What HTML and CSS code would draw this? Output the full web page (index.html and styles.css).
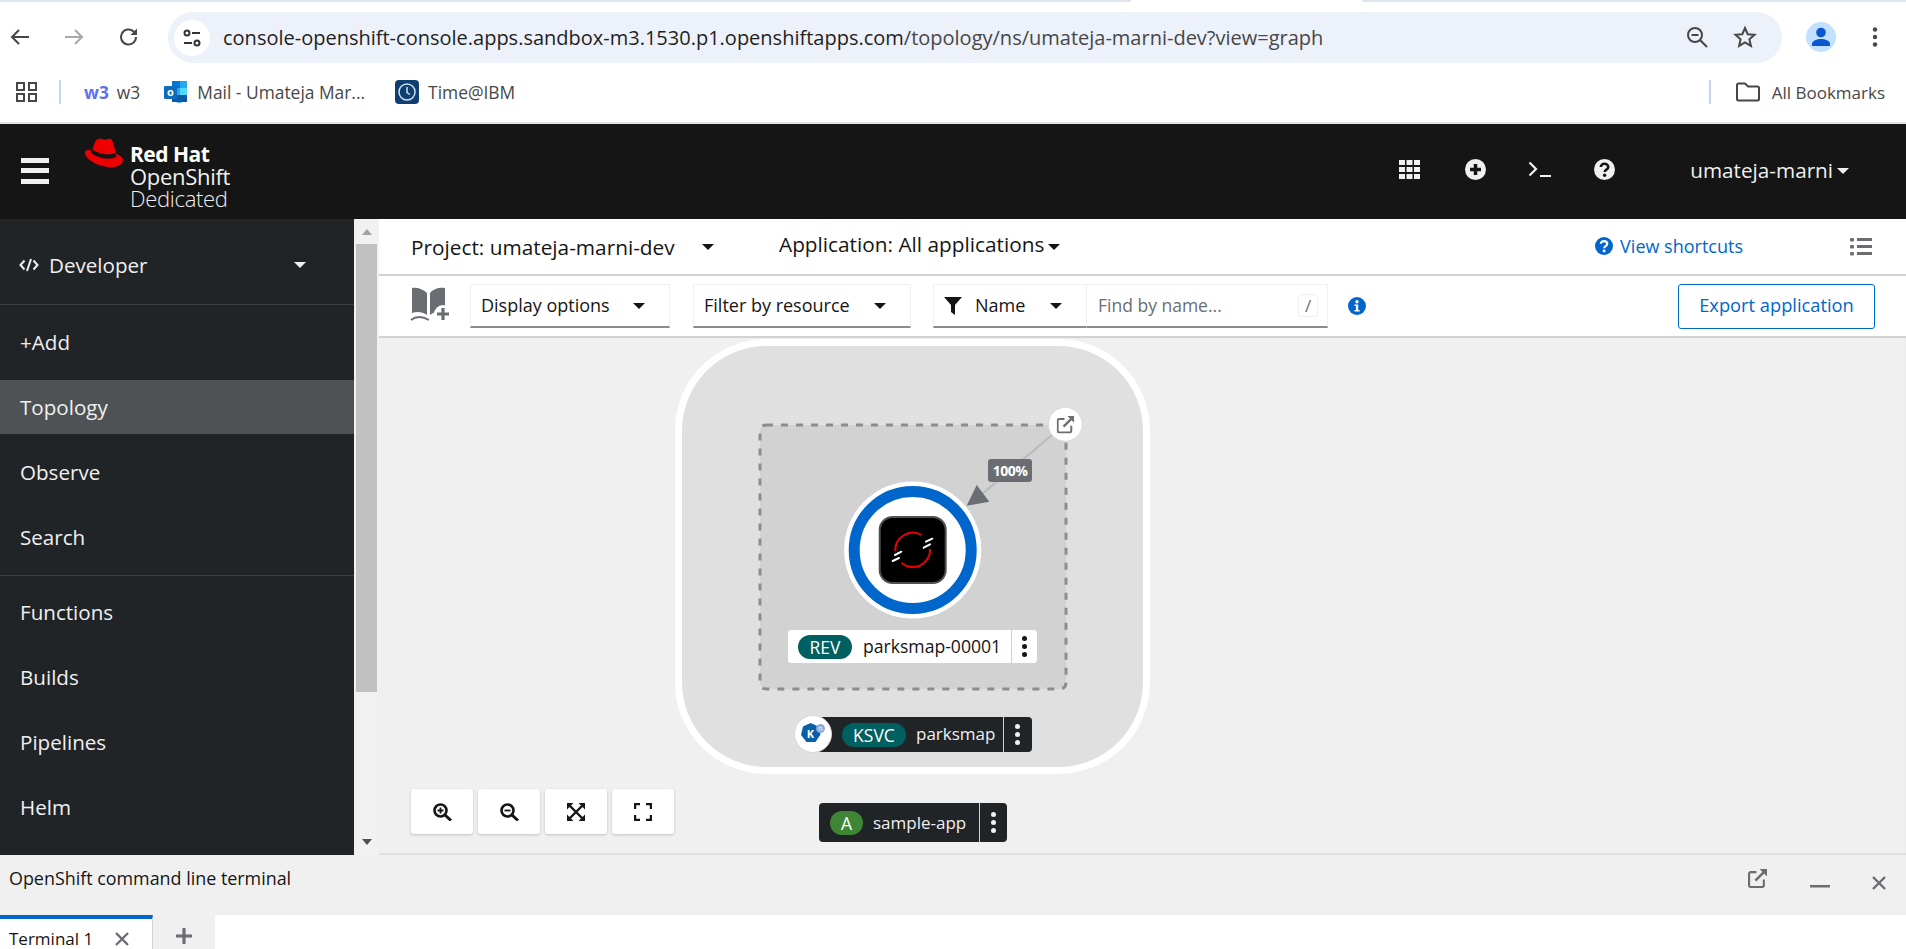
FILE: index.html
```html
<!DOCTYPE html>
<html lang="en">
<head>
    <meta charset="UTF-8">
    <title>Topology - OpenShift Dedicated</title>
    <link rel="stylesheet" href="styles.css">
</head>
<body>
<!-- browser chrome -->
<div class="tabstrip">
    <span class="strip-left"></span>
    <span class="strip-right"></span>
</div>
<div class="toolbar">
    <svg class="tb-icon" width="24" height="24" viewBox="0 0 24 24"><path d="M21 12H4M11 5l-7 7 7 7" fill="none" stroke="#474747" stroke-width="2"/></svg>
    <svg class="tb-icon fwd" width="24" height="24" viewBox="0 0 24 24"><path d="M3 12h17M13 5l7 7-7 7" fill="none" stroke="#a8a8a8" stroke-width="2"/></svg>
    <svg class="tb-icon reload" width="24" height="24" viewBox="0 0 24 24"><path d="M19 12a7.500 7.500 0 1 1-2.400-5.500L19 9" fill="none" stroke="#474747" stroke-width="2"/><path d="M20 3.500V10h-6.500z" fill="#474747"/></svg>
    <div class="omnibox">
        <span class="site-btn">
            <svg width="22" height="22" viewBox="0 0 22 22"><g fill="none" stroke="#333" stroke-width="2"><circle cx="6" cy="6" r="2.500"/><circle cx="16" cy="16" r="2.500"/><path d="M11 6h8M3 16h8"/></g></svg>
        </span>
        <span class="url">console-openshift-console.apps.sandbox-m3.1530.p1.openshiftapps.com<span class="url-path">/topology/ns/umateja-marni-dev?view=graph</span></span>
        <svg class="omni-zoom" width="24" height="24" viewBox="0 0 24 24"><g fill="none" stroke="#474747" stroke-width="2"><circle cx="10" cy="10" r="7"/><path d="M15 15l7 7M6.500 10h7"/></g></svg>
        <svg class="omni-star" width="24" height="24" viewBox="0 0 24 24"><path d="M12 3l2.700 6.200 6.800.6-5.100 4.500 1.500 6.600L12 17.400 6.100 20.900l1.500-6.600L2.500 9.800l6.800-.6z" fill="none" stroke="#474747" stroke-width="2"/></svg>
    </div>
    <span class="avatar">
        <svg width="22" height="22" viewBox="0 0 22 22"><circle cx="11" cy="6.500" r="4.800" fill="#0b57d0"/><path d="M2 20v-2c0-3.500 5-5 9-5s9 1.500 9 5v2z" fill="#0b57d0"/></svg>
    </span>
    <svg class="tb-more" width="6" height="24" viewBox="0 0 6 24"><circle cx="3" cy="4.500" r="2.200" fill="#474747"/><circle cx="3" cy="12" r="2.200" fill="#474747"/><circle cx="3" cy="19.500" r="2.200" fill="#474747"/></svg>
</div>
<div class="bookmarks">
    <svg class="apps" width="21" height="20" viewBox="0 0 21 20"><g fill="none" stroke="#474747" stroke-width="2"><rect x="1" y="1" width="7" height="7"/><rect x="13" y="1" width="7" height="7"/><rect x="1" y="12" width="7" height="7"/><rect x="13" y="12" width="7" height="7"/></g></svg>
    <span class="bm-sep"></span>
    <span class="bm bm-w3"><b>w3</b> w3</span>
    <span class="bm bm-mail">
        <svg width="24" height="24" viewBox="0 0 24 24"><path d="M8 1h15v20l-8 2-7-2z" fill="#28a8ea"/><path d="M8 1h8v7H8z" fill="#0078d4"/><path d="M16 8h7v7h-7z" fill="#50d9ff"/><path d="M8 15h15v7H8z" fill="#0a5aa8"/><rect x="0" y="6" width="13" height="13" rx="1" fill="#0f6cbd"/><text x="6.500" y="16" class="bm-o">o</text></svg>
        Mail - Umateja Mar...
    </span>
    <span class="bm bm-time">
        <svg width="24" height="24" viewBox="0 0 24 24"><rect width="24" height="24" rx="4" fill="#0f3e70"/><circle cx="12" cy="12" r="8" fill="none" stroke="#cfe0f2" stroke-width="1.500"/><path d="M12 7v5.500l3 2" fill="none" stroke="#cfe0f2" stroke-width="1.500"/></svg>
        Time@IBM
    </span>
    <span class="bm-right">
        <span class="bm-sep"></span>
        <svg class="folder" width="24" height="20" viewBox="0 0 24 20"><path d="M1 3a1.500 1.500 0 0 1 1.500-1.500H9l3 3h9.500A1.500 1.500 0 0 1 23 6v11a1.500 1.500 0 0 1-1.500 1.500h-19A1.500 1.500 0 0 1 1 17z" fill="none" stroke="#474747" stroke-width="2"/></svg>
        <span class="bm bm-all">All Bookmarks</span>
    </span>
</div>

<!-- masthead -->
<header class="masthead">
    <span class="hamburger"><i></i><i></i><i></i></span>
    <svg class="hat" width="40" height="30" viewBox="0 0 40 30">
        <path d="M1 14C0 18 8 27 24 29c10 1 15-3 15-7 0-3-4-5-7-6L29 4c-1-3-3-4-5-3s-4 1-6 0c-3-1-6 0-7 3L8 13c-2-1-5-2-7 1z" fill="#e00"/>
        <path d="M8.500 11.500C13 15 23 18 31 15l1.500 4C23 23 12 19 6.500 14.500z" fill="#151515"/>
    </svg>
    <div class="brand">
        <div class="brand-rh">Red Hat</div>
        <div class="brand-line">OpenShift</div>
        <div class="brand-line thin">Dedicated</div>
    </div>
    <div class="mast-tools">
        <svg class="mt-grid" width="21" height="19" viewBox="0 0 21 19"><g fill="#f0f0f0"><rect width="6" height="5"/><rect x="7.500" width="6" height="5"/><rect x="15" width="6" height="5"/><rect y="7" width="6" height="5"/><rect x="7.500" y="7" width="6" height="5"/><rect x="15" y="7" width="6" height="5"/><rect y="14" width="6" height="5"/><rect x="7.500" y="14" width="6" height="5"/><rect x="15" y="14" width="6" height="5"/></g></svg>
        <svg class="mt-plus" width="21" height="21" viewBox="0 0 21 21"><circle cx="10.500" cy="10.500" r="10.500" fill="#f0f0f0"/><path d="M10.500 5v11M5 10.500h11" stroke="#151515" stroke-width="3.500"/></svg>
        <svg class="mt-term" width="23" height="17" viewBox="0 0 23 17"><path d="M1.500 1.500L8 8l-6.500 6.500M12 15h11" fill="none" stroke="#f0f0f0" stroke-width="2.200"/></svg>
        <svg class="mt-help" width="21" height="21" viewBox="0 0 21 21"><circle cx="10.500" cy="10.500" r="10.500" fill="#f0f0f0"/><path d="M6.800 8c0-2 1.700-3.200 3.700-3.200s3.800 1.200 3.800 3.200c0 2.700-3.600 2.600-3.600 5" fill="none" stroke="#151515" stroke-width="2.600"/><circle cx="10.600" cy="16.300" r="1.700" fill="#151515"/></svg>
        <span class="mast-user">umateja-marni</span>
        <span class="caret caret-light"></span>
    </div>
</header>

<div class="main">
    <!-- left nav -->
    <nav class="sidebar">
        <div class="perspective">
            <svg width="20" height="14" viewBox="0 0 20 14"><path d="M5.500 2.500L1.500 7l4 4.500M14.500 2.500l4 4.500-4 4.500M12 1L8 13" fill="none" stroke="#f0f0f0" stroke-width="2"/></svg>
            <span class="perspective-name">Developer</span>
            <span class="caret caret-light"></span>
        </div>
        <ul class="nav-list">
            <li>+Add</li>
            <li class="active">Topology</li>
            <li>Observe</li>
            <li>Search</li>
        </ul>
        <ul class="nav-list second">
            <li>Functions</li>
            <li>Builds</li>
            <li>Pipelines</li>
            <li>Helm</li>
        </ul>
    </nav>
    <div class="scrollbar">
        <span class="sb-up"></span>
        <span class="sb-thumb"></span>
        <span class="sb-down"></span>
    </div>

    <section class="content">
        <div class="project-bar">
            <span class="project">Project: umateja-marni-dev</span>
            <span class="caret caret-dark"></span>
            <span class="application">Application: All applications</span>
            <span class="caret caret-dark app-caret"></span>
            <span class="shortcuts">
                <svg width="18" height="18" viewBox="0 0 21 21"><circle cx="10.500" cy="10.500" r="10.500" fill="#06c"/><path d="M6.800 8c0-2 1.700-3.200 3.700-3.200s3.800 1.200 3.800 3.200c0 2.700-3.600 2.600-3.600 5" fill="none" stroke="#fff" stroke-width="2.600"/><circle cx="10.600" cy="16.300" r="1.700" fill="#fff"/></svg>
                View shortcuts
            </span>
            <svg class="list-icon" width="22" height="18" viewBox="0 0 22 18"><g fill="#6a6e73"><rect width="4" height="3.500" rx="1"/><rect y="7" width="4" height="3.500" rx="1"/><rect y="14" width="4" height="3.500" rx="1"/><rect x="7" width="15" height="3"/><rect x="7" y="7" width="15" height="3"/><rect x="7" y="14" width="15" height="3"/></g></svg>
        </div>
        <div class="filter-bar">
            <svg class="book" width="40" height="34" viewBox="0 0 40 34">
                <path d="M2 1c5-1 11 1 15 5v22c-4-3-10-4-15-2zM20 6c3-4 9-6 15-5v24c-7-1-12 0-15 3z" fill="#6a6e73"/>
                <path d="M1 33c5-4 11-4 18 0" fill="none" stroke="#6a6e73" stroke-width="2"/>
                <circle cx="33" cy="27" r="9" fill="#fff"/>
                <path d="M33 21v12M27 27h12" stroke="#6a6e73" stroke-width="3.200"/>
            </svg>
            <div class="select select-display"><span>Display options</span><i class="caret caret-dark"></i></div>
            <div class="select select-resource"><span>Filter by resource</span><i class="caret caret-dark"></i></div>
            <div class="search-group">
                <div class="select select-name">
                    <svg width="18" height="18" viewBox="0 0 18 18"><path d="M0 0h18l-7 8v10l-4-3V8z" fill="#151515"/></svg>
                    <span class="name-text">Name</span><i class="caret caret-dark"></i>
                </div>
                <div class="find">
                    <span class="placeholder">Find by name...</span>
                    <kbd class="slash">/</kbd>
                </div>
            </div>
            <svg class="info" width="18" height="18" viewBox="0 0 18 18"><circle cx="9" cy="9" r="9" fill="#06c"/><circle cx="9" cy="4.800" r="1.700" fill="#fff"/><path d="M6.500 7.500h3.700v5.500h1.400v1.500H6.500V13h1.400V9H6.500z" fill="#fff"/></svg>
            <button class="export">Export application</button>
        </div>

        <!-- topology graph -->
        <div class="canvas">
            <svg class="graph" width="1527" height="516" viewBox="0 0 1527 516">
                <defs>
                    <symbol id="ext" viewBox="0 0 18 18">
                        <path d="M8 3H2.500A1.500 1.500 0 0 0 1 4.500v11A1.500 1.500 0 0 0 2.500 17h11a1.500 1.500 0 0 0 1.500-1.500V10" fill="none" stroke="currentColor" stroke-width="2"/>
                        <path d="M7 11l8-8" stroke="currentColor" stroke-width="2.400"/>
                        <path d="M11 0h7v7z" fill="currentColor"/>
                    </symbol>
                </defs>
                <rect x="299.500" y="4.500" width="468" height="428" rx="88" fill="#e0e0e0" stroke="#fff" stroke-width="7"/>
                <rect x="381" y="87" width="306" height="264" rx="6" fill="#d2d2d2" stroke="#8a8d90" stroke-width="3" stroke-dasharray="7 8"/>
                <path d="M686 86L603 156" stroke="#b8bbbe" stroke-width="2"/>
                <polygon points="587.700,167.700 597.700,147 610.300,163.700" fill="#6a6e73"/>
                <circle cx="533.700" cy="212" r="68.600" fill="#fff"/>
                <circle cx="533.700" cy="212" r="58.500" fill="#fff" stroke="#06c" stroke-width="11"/>
                <rect x="500.700" y="179" width="66" height="66" rx="13" fill="#000" stroke="#4f5255" stroke-width="2"/>
                <path d="M516.300 213A17.500 17.500 0 0 1 542.500 197M551.200 211A17.500 17.500 0 0 1 522.500 225" fill="none" stroke="#e00" stroke-width="2"/>
                <path d="M547 203.700l6.300-3M544.700 209.700l6.300-3.400M516 217l6.300-3.300M513.700 223l6.300-3" stroke="#fff" stroke-width="2" stroke-linecap="round"/>
                <circle cx="686.300" cy="86.300" r="17" fill="#fff" stroke="#d8d8d8"/>
                <use href="#ext" x="677.700" y="78" width="17.500" height="17.500" color="#6a6e73"/>
            </svg>

            <span class="edge-tag">100%</span>

            <div class="node-label light rev-label">
                <span class="badge badge-teal rev-badge">REV</span>
                <span class="node-name">parksmap-00001</span>
                <span class="kebab"><i></i><i></i><i></i></span>
            </div>

            <div class="node-label dark ksvc-label">
                <span class="badge badge-teal ksvc-badge">KSVC</span>
                <span class="node-name">parksmap</span>
                <span class="kebab"><i></i><i></i><i></i></span>
            </div>
            <svg class="ksvc-icon" width="38" height="38" viewBox="0 0 38 38">
                <circle cx="19" cy="19" r="18.500" fill="#fff" stroke="#d8d8d8"/>
                <polygon points="16.500,8 24.500,11.500 26.500,19.500 21.500,27 12.500,27 7,20 9,11.500" fill="#0b5fa8"/>
                <text x="16.500" y="23" class="k-letter">K</text>
                <circle cx="26.500" cy="13.500" r="4.500" fill="#8faad8"/>
                <text x="26.500" y="16" class="n-letter">n</text>
            </svg>

            <div class="node-label dark app-label">
                <span class="badge badge-green app-badge">A</span>
                <span class="node-name">sample-app</span>
                <span class="kebab"><i></i><i></i><i></i></span>
            </div>

            <div class="zoom-tools">
                <button><svg width="19" height="18" viewBox="0 0 19 18"><g fill="none" stroke="#151515"><circle cx="7.500" cy="7.500" r="6" stroke-width="2.600"/><path d="M12 12l6 5.500" stroke-width="3"/><path d="M7.500 4.500v6M4.500 7.500h6" stroke-width="1.800"/></g></svg></button>
                <button><svg width="19" height="18" viewBox="0 0 19 18"><g fill="none" stroke="#151515"><circle cx="7.500" cy="7.500" r="6" stroke-width="2.600"/><path d="M12 12l6 5.500" stroke-width="3"/><path d="M4.500 7.500h6" stroke-width="1.800"/></g></svg></button>
                <button><svg width="18" height="18" viewBox="0 0 18 18"><path d="M3 3l12 12M15 3L3 15" stroke="#151515" stroke-width="2.400"/><path d="M0 0h6.500L0 6.500zM18 0v6.500L11.500 0zM0 18v-6.500L6.500 18zM18 18h-6.500l6.500-6.500z" fill="#151515"/></svg></button>
                <button><svg width="18" height="18" viewBox="0 0 18 18"><path d="M1 6V1h5M12 1h5v5M1 12v5h5M17 12v5h-5" fill="none" stroke="#151515" stroke-width="2.400"/></svg></button>
            </div>
        </div>
    </section>
</div>

<!-- terminal drawer -->
<div class="drawer-head">
    <span class="drawer-title">OpenShift command line terminal</span>
    <span class="drawer-tools">
        <svg class="dt-ext" width="19" height="19"><use href="#ext" width="19" height="19" color="#6a6e73"/></svg>
        <svg class="dt-min" width="20" height="3" viewBox="0 0 20 3"><rect width="20" height="2.500" fill="#6a6e73"/></svg>
        <svg class="dt-close" width="14" height="14" viewBox="0 0 14 14"><path d="M1 1l12 12M13 1L1 13" stroke="#6a6e73" stroke-width="2.400"/></svg>
    </span>
</div>
<div class="drawer-tabs">
    <div class="term-tab">
        <span>Terminal 1</span>
        <svg width="14" height="14" viewBox="0 0 14 14"><path d="M1 1l12 12M13 1L1 13" stroke="#6a6e73" stroke-width="2.400"/></svg>
    </div>
    <div class="term-add">
        <svg width="16" height="16" viewBox="0 0 16 16"><path d="M8 0v16M0 8h16" stroke="#6a6e73" stroke-width="3.200"/></svg>
    </div>
</div>
</body>
</html>
```
FILE: styles.css
```css
* {
    margin: 0;
    padding: 0;
    box-sizing: border-box;
}

html, body {
    height: 949px;
    overflow: hidden;
}

body {
    width: 1906px;
    background: #fff;
    color: #151515;
    font-family: "Open Sans", "Liberation Sans", sans-serif;
    font-size: 18px;
}

ul {
    list-style: none;
}

/* browser chrome */
.tabstrip {
    display: flex;
    justify-content: space-between;
    height: 2px;
}

.strip-left {
    width: 1131px;
    background: #dfe5ec;
}

.strip-right {
    width: 544px;
    background: #dfe5ec;
}

.toolbar {
    display: flex;
    align-items: center;
    height: 70px;
    padding: 0 0 0 8px;
}

.tb-icon {
    flex: none;
}

.fwd {
    margin-left: 30px;
}

.reload {
    margin-left: 31px;
}

.omnibox {
    display: flex;
    align-items: center;
    width: 1614px;
    height: 51px;
    margin: 0 0 0 27px;
    padding-left: 6px;
    background: #ecf1fa;
    border-radius: 26px;
}

.site-btn {
    display: flex;
    align-items: center;
    justify-content: center;
    width: 36px;
    height: 36px;
    margin-top: 1px;
    background: #fff;
    border-radius: 50%;
}

.url {
    width: 1462px;
    margin-left: 13px;
    font-size: 20px;
    white-space: nowrap;
    color: #1f1f1f;
}

.url-path {
    color: #474747;
}

.omni-star {
    margin-left: 24px;
}

.avatar {
    display: flex;
    align-items: center;
    justify-content: center;
    width: 30px;
    height: 30px;
    margin-left: 24px;
    background: #c2e0ff;
    border-radius: 50%;
}

.tb-more {
    margin-left: 36px;
}

.bookmarks {
    display: flex;
    align-items: center;
    height: 52px;
    padding-left: 16px;
    padding-bottom: 10px;
    border-bottom: 2px solid #e2e2e2;
    font-size: 17.400px;
    color: #474747;
}

.bm-sep {
    width: 2px;
    height: 24px;
    margin-left: 22px;
    background: #c7d7f0;
}

.bm {
    display: flex;
    align-items: center;
    white-space: nowrap;
}

.bm svg {
    margin-right: 9px;
}

.bm-w3 {
    margin-left: 23px;
}

.bm-w3 b {
    margin-right: 8px;
    color: #5f6ff0;
}

.bm-mail {
    margin-left: 24px;
}

.bm-time {
    margin-left: 30px;
}

.bm-all {
    font-size: 17px;
}

.bm-o {
    font-size: 11px;
    font-weight: 700;
    fill: #fff;
    text-anchor: middle;
}

.bm-right {
    display: flex;
    align-items: center;
    margin-left: auto;
    padding-right: 21px;
}

.folder {
    margin: 0 12px 0 25px;
}

/* masthead */
.masthead {
    display: flex;
    align-items: center;
    height: 95px;
    padding-left: 21px;
    background: #151515;
    color: #f0f0f0;
}

.hamburger {
    display: flex;
    flex-direction: column;
    justify-content: space-between;
    width: 28px;
    height: 26px;
    margin-bottom: 2px;
}

.hamburger i {
    height: 5px;
    background: #f0f0f0;
}

.hat {
    align-self: flex-start;
    margin: 14px 0 0 35px;
}

.brand {
    margin-left: 6px;
    margin-top: 8px;
}

.brand-rh {
    font-size: 21px;
    font-weight: 700;
    line-height: 22px;
    letter-spacing: -0.5px;
    color: #fff;
}

.brand-line {
    font-size: 22px;
    line-height: 22px;
    letter-spacing: -0.3px;
}

.thin {
    font-weight: 300;
}

.mast-tools {
    display: flex;
    align-items: center;
    margin-left: auto;
    padding-right: 57px;
}

.mast-tools svg {
    margin-bottom: 4px;
}

.mt-plus {
    margin-left: 45px;
}

.mt-term {
    margin-left: 42px;
}

.mt-help {
    margin-left: 43px;
}

.mast-user {
    margin-left: 75px;
    margin-bottom: 4px;
    font-size: 20.700px;
}

.caret {
    display: inline-block;
    width: 0;
    height: 0;
    border-style: solid;
    border-width: 6px 6px 0;
    border-color: transparent;
}

.caret-light {
    border-top-color: #f0f0f0;
}

.caret-dark {
    border-top-color: #151515;
}

.mast-tools .caret {
    margin-left: 4px;
    margin-bottom: 2px;
}

/* page body */
.main {
    display: flex;
    height: 636px;
}

.sidebar {
    width: 354px;
    background: #212427;
    color: #f0f0f0;
    font-size: 20.600px;
}

.perspective {
    display: flex;
    align-items: center;
    height: 86px;
    padding-left: 19px;
    padding-top: 6px;
    border-bottom: 1px solid #3c3f42;
}

.perspective-name {
    width: 245px;
    margin-left: 10px;
}

.nav-list {
    padding: 10px 0 0;
}

.nav-list li {
    display: flex;
    align-items: center;
    height: 54px;
    margin-bottom: 11px;
    padding-left: 20px;
}

.nav-list .active {
    background: #4f5255;
}

.second {
    padding-top: 9px;
    border-top: 1px solid #3c3f42;
}

.scrollbar {
    display: flex;
    flex-direction: column;
    align-items: center;
    width: 25px;
    background: #f1f1f1;
}

.sb-up {
    width: 0;
    height: 0;
    margin-top: 10px;
    border-style: solid;
    border-width: 0 5px 6px;
    border-color: transparent transparent #a3a3a3;
}

.sb-thumb {
    width: 21px;
    height: 448px;
    margin-top: 9px;
    background: #c1c1c1;
}

.sb-down {
    width: 0;
    height: 0;
    margin-top: auto;
    margin-bottom: 10px;
    border-style: solid;
    border-width: 6px 5px 0;
    border-color: #505050 transparent transparent;
}

.content {
    flex: 1;
    display: flex;
    flex-direction: column;
}

.project-bar {
    display: flex;
    align-items: center;
    height: 57px;
    padding-left: 32px;
    border-bottom: 2px solid #d2d2d2;
    font-size: 20.800px;
}

.project {
    width: 265px;
    white-space: nowrap;
}

.project-bar > .caret {
    margin-left: 26px;
}

.application {
    margin-left: 65px;
    margin-bottom: 6px;
    white-space: nowrap;
}

.project-bar > .app-caret {
    margin-left: 4px;
}

.shortcuts {
    display: flex;
    align-items: center;
    gap: 7px;
    margin-left: auto;
    margin-bottom: 2px;
    color: #06c;
    font-size: 18px;
}

.list-icon {
    margin: 0 34px 0 107px;
}

.filter-bar {
    display: flex;
    align-items: center;
    height: 62px;
    padding-left: 31px;
    border-bottom: 2px solid #d2d2d2;
}

.book {
    margin-bottom: 4px;
}

.select {
    display: flex;
    align-items: center;
    justify-content: space-between;
    height: 44px;
    padding: 0 24px 0 10px;
    border: 1px solid #f0f0f0;
    border-bottom: 2px solid #8a8d90;
    font-size: 18px;
    white-space: nowrap;
}

.select span {
    margin-bottom: 2px;
}

.select-display {
    width: 200px;
    margin-left: 20px;
}

.select-resource {
    width: 218px;
    margin-left: 23px;
}

.search-group {
    display: flex;
    margin-left: 22px;
}

.select-name {
    justify-content: flex-start;
    width: 154px;
    padding: 0 24px 0 10px;
}

.name-text {
    margin-left: 13px;
}

.select-name .caret {
    margin-left: auto;
}

.find {
    display: flex;
    align-items: center;
    justify-content: space-between;
    width: 241px;
    height: 44px;
    padding: 0 9px 0 11px;
    border: 1px solid #f0f0f0;
    border-bottom: 2px solid #8a8d90;
    border-left: 0;
    font-size: 17.500px;
    color: #6a6e73;
}

.placeholder {
    margin-bottom: 2px;
}

.slash {
    width: 20px;
    height: 23px;
    border: 1px solid #f0f0f0;
    border-radius: 3px;
    font-family: inherit;
    font-size: 17px;
    line-height: 21px;
    text-align: center;
}

.info {
    margin-left: 20px;
}

.export {
    width: 197px;
    height: 45px;
    margin-left: auto;
    margin-right: 31px;
    padding-bottom: 3px;
    background: #fff;
    border: 1px solid #06c;
    border-radius: 3px;
    color: #06c;
    font-family: inherit;
    font-size: 18.300px;
}

/* graph */
.canvas {
    position: relative;
    flex: 1;
    background: #f0f0f0;
    box-shadow: inset 0 -2px 2px -1px #d2d2d2;
}

.graph {
    position: absolute;
    left: 0;
    top: 0;
}

.edge-tag {
    position: absolute;
    left: 609px;
    top: 121px;
    width: 44px;
    height: 23px;
    background: #6a6e73;
    border-radius: 3px;
    color: #fff;
    font-size: 14px;
    font-weight: 700;
    line-height: 23px;
    text-align: center;
    letter-spacing: -0.5px;
}

.node-label {
    position: absolute;
    display: flex;
    align-items: center;
    font-size: 17px;
    white-space: nowrap;
}

.light {
    background: #fff;
    color: #151515;
    border-radius: 3px;
}

.dark {
    background: #212427;
    color: #f0f0f0;
    border-radius: 4px;
}

.badge {
    display: block;
    height: 24px;
    border-radius: 12px;
    color: #fff;
    font-size: 17.500px;
    line-height: 24px;
    text-align: center;
}

.badge-teal {
    background: #005f60;
}

.badge-green {
    background: #3e8635;
}

.kebab {
    display: flex;
    flex-direction: column;
    align-items: center;
    justify-content: center;
    gap: 3px;
    height: 100%;
    border-left: 1px solid #d2d2d2;
}

.kebab i {
    width: 5px;
    height: 5px;
    background: #151515;
    border-radius: 50%;
}

.dark .kebab i {
    background: #f0f0f0;
}

.rev-label {
    left: 409px;
    top: 292px;
    width: 249px;
    height: 33px;
    padding-left: 10px;
}

.rev-badge {
    width: 54px;
}

.rev-label .node-name {
    width: 148px;
    margin-left: 11px;
    margin-bottom: 2px;
    font-size: 17.600px;
}

.rev-label .kebab {
    width: 26px;
}

.ksvc-label {
    left: 434px;
    top: 379px;
    width: 219px;
    height: 35px;
    padding-left: 29px;
}

.ksvc-badge {
    width: 64px;
}

.ksvc-label .node-name {
    width: 87px;
    margin-left: 10px;
    margin-bottom: 2px;
}

.ksvc-label .kebab {
    width: 28px;
}

.ksvc-icon {
    position: absolute;
    left: 415px;
    top: 377px;
}

.k-letter {
    font-size: 11px;
    font-weight: 700;
    fill: #fff;
    text-anchor: middle;
}

.n-letter {
    font-size: 7px;
    fill: #fff;
    text-anchor: middle;
}

.app-label {
    left: 440px;
    top: 465px;
    width: 188px;
    height: 39px;
    padding-left: 11px;
}

.app-badge {
    width: 33px;
}

.app-label .node-name {
    width: 106px;
    margin-left: 10px;
}

.app-label .kebab {
    width: 27px;
}

.zoom-tools {
    position: absolute;
    left: 32px;
    top: 451px;
    display: flex;
    gap: 5px;
}

.zoom-tools button {
    display: flex;
    align-items: center;
    justify-content: center;
    width: 62px;
    height: 45px;
    background: #fff;
    border: 0;
    border-radius: 3px;
    box-shadow: 0 1px 3px rgba(3, 3, 3, 0.2);
}

/* terminal drawer */
.drawer-head {
    display: flex;
    align-items: center;
    height: 60px;
    padding: 0 20px 14px 9px;
    background: #f0f0f0;
}

.drawer-title {
    font-size: 17.900px;
}

.drawer-tools {
    display: flex;
    align-items: center;
    margin-left: auto;
}

.dt-min {
    margin: 16px 0 0 43px;
}

.dt-close {
    margin: 10px 0 0 42px;
}

.drawer-tabs {
    display: flex;
    height: 34px;
}

.term-tab {
    display: flex;
    align-items: center;
    width: 153px;
    padding: 9px 0 0 9px;
    border-top: 4px solid #06c;
    border-right: 1px solid #d2d2d2;
    font-size: 17px;
}

.term-tab svg {
    margin-left: 22px;
}

.term-add {
    display: flex;
    align-items: center;
    justify-content: center;
    width: 62px;
    padding-top: 8px;
    background: #f0f0f0;
}
```
